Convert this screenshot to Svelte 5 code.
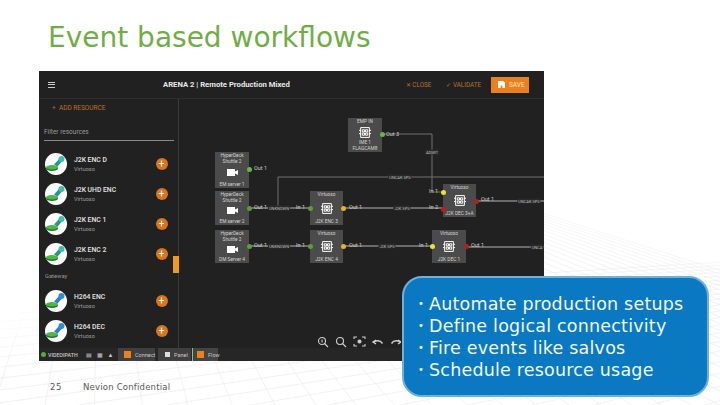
<script>
  const resources = [
    { name: "J2K ENC D", kind: "enc" },
    { name: "J2K UHD ENC", kind: "enc" },
    { name: "J2K ENC 1", kind: "enc" },
    { name: "J2K ENC 2", kind: "enc" },
    { group: "Gateway" },
    { name: "H264 ENC", kind: "h264" },
    { name: "H264 DEC", kind: "h264" }
  ];

  const nodes = [
    { x: 348, y: 118, w: 34, h: 34, top: "EMP IN", icon: "chip", bottom: "IME 1\nFLAGCAM8" },
    { x: 215, y: 152, w: 34, h: 36, top: "HyperDeck\nShuttle 2", icon: "cam", bottom: "EM server 1" },
    { x: 215, y: 191, w: 34, h: 34, top: "HyperDeck\nShuttle 2", icon: "cam", bottom: "EM server 2" },
    { x: 215, y: 230, w: 34, h: 33, top: "HyperDeck\nShuttle 2", icon: "cam", bottom: "DM Server 4" },
    { x: 310, y: 191, w: 33, h: 34, top: "Virtuoso", icon: "chip", bottom: "J2K ENC 3" },
    { x: 310, y: 230, w: 33, h: 33, top: "Virtuoso", icon: "chip", bottom: "J2K ENC 4" },
    { x: 443, y: 184, w: 33, h: 33, top: "Virtuoso", icon: "chip", bottom: "J2K DEC 3+A" },
    { x: 432, y: 230, w: 34, h: 33, top: "Virtuoso", icon: "chip", bottom: "J2K DEC 1" }
  ];

  const dimWires = ["M382 134H432V192H443", "M278 208V177H544"];
  const wires = [
    "M249 208H310",
    "M249 246H310",
    "M343 208H443",
    "M343 246H432",
    "M476 201H544",
    "M466 247H544"
  ];

  const ports = [
    [382, 134, "#6fb544"], [249, 169, "#6fb544"],
    [249, 208, "#5f9a3e"], [249, 246, "#5f9a3e"],
    [310, 208, "#5f9a3e"], [310, 246, "#5f9a3e"],
    [343, 208, "#e6b422"], [343, 246, "#e6b422"],
    [443, 192, "#e8e23a"], [443, 209, "#b3201f"], [476, 201, "#b3201f"],
    [432, 246, "#e8e23a"], [466, 246, "#b3201f"]
  ];

  const portLabels = [
    [254, 165, "Out 1"], [386, 131, "Out 3"],
    [254, 204, "Out 1"], [296, 204, "In 1"],
    [254, 242, "Out 1"], [296, 242, "In 1"],
    [349, 204, "Out 1"], [349, 242, "Out 1"],
    [429, 188, "In 1"], [429, 204, "In 2"],
    [481, 196, "Out 1"], [419, 242, "In 1"], [471, 242, "Out 1"]
  ];

  const wireLabels = [
    [432, 152, "ADMIT"], [400, 177, "UNCAK SPS"],
    [279, 208, "UNKNOWN"], [279, 246, "UNKNOWN"],
    [402, 208, "J2K SPS"], [387, 246, "J2K SPS"],
    [529, 201, "UNCAK SPS"], [537, 247, "UNCA"]
  ];

  const points = [
    "Automate production setups",
    "Define logical connectivity",
    "Fire events like salvos",
    "Schedule resource usage"
  ];

  // perspective floor behind the slide: two fans of rays, one per vanishing point
  const slope = 0.13;
  const fan = (vx, vy) => {
    let d = "";
    for (let t = vx - 1300; t <= vx + 1300; t += 36) {
      const py = vy + (t - vx) * slope + 250;
      d += `M${vx} ${vy}L${vx + (t - vx) * 4} ${vy + (py - vy) * 4}`;
    }
    return d;
  };
  const floor = fan(100, 70) + fan(1300, 226);
</script>

<div class="slide">
  <svg class="backdrop" viewBox="0 0 720 405" aria-hidden="true">
    <defs>
      <linearGradient id="fade" gradientUnits="userSpaceOnUse" x1="600" y1="133" x2="580" y2="283">
        <stop offset="0" stop-color="#fff" />
        <stop offset="0.2" stop-color="#fff" stop-opacity="0.85" />
        <stop offset="1" stop-color="#fff" stop-opacity="0" />
      </linearGradient>
      <linearGradient id="fade-left" x1="0" y1="0" x2="0" y2="1">
        <stop offset="0.8" stop-color="#fff" />
        <stop offset="1" stop-color="#fff" stop-opacity="0" />
      </linearGradient>
    </defs>
    <path d={floor} />
    <polygon points="-100,30 -100,194 820,313 820,155" fill="url(#fade)" />
    <rect x="0" y="50" width="39" height="320" fill="url(#fade-left)" />
  </svg>

  <h1>Event based workflows</h1>

  <div class="app-shot">
    <header class="topbar">
      <div class="burger"><i></i><i></i><i></i></div>
      <div class="app-title">ARENA 2 | Remote Production Mixed</div>
      <div class="actions">
        <span class="action">✕ CLOSE</span>
        <span class="action">✓ VALIDATE</span>
        <span class="save">
          <svg width="7" height="7" viewBox="0 0 8 8"><path d="M0 0h6l2 2v6H5V5H3v3H0z" fill="#fff" /></svg>
          SAVE
        </span>
      </div>
    </header>

    <div class="work">
      <aside class="sidebar">
        <div class="add">+&nbsp;&nbsp;ADD RESOURCE</div>
        <div class="filter">Filter resources</div>
        <ul>
          {#each resources as r}
            {#if r.group}
              <li class="group">{r.group}</li>
            {:else}
              <li class="resource">
                <svg class="avatar" viewBox="0 0 22 22">
                  <circle cx="11" cy="11" r="11" fill="#fff" />
                  <ellipse cx="7" cy="15.500" rx="6" ry="2.500" fill="#1f7a2a" />
                  <ellipse cx="7" cy="14.300" rx="6" ry="2.200" fill="#49b845" />
                  <path d="M9 11.500L15 5l3 2.500-5.500 6z" fill={r.kind === "enc" ? "#2a9488" : "#2f7fc0"} />
                  <circle cx="16.500" cy="6" r="3" fill={r.kind === "enc" ? "#3cc0ae" : "#2b8ed8"} />
                </svg>
                <div class="res-text">
                  <b>{r.name}</b>
                  <small>Virtuoso</small>
                </div>
                <span class="plus">+</span>
              </li>
            {/if}
          {/each}
        </ul>
        <div class="scroll-thumb"></div>
      </aside>
      <div class="canvas"></div>
    </div>

    <footer class="statusbar">
      <span class="brand"><i></i>VIDEOIPATH</span>
      <span class="glyph">▤</span><span class="glyph">▦</span><span class="glyph">▲</span>
      <span class="tab connect"><em></em>Connect</span>
      <span class="tab panel"><em class="white"></em>Panel</span>
      <span class="tab flow"><em></em>Flow</span>
    </footer>

    <div class="zoom-tools">
      <svg width="84" height="12" viewBox="0 0 84 12" fill="none" stroke="#d0d0d0" stroke-width="1.100">
        <circle cx="5" cy="5" r="3.500" /><path d="M7.500 7.500L11 11M5 3.500v3" />
        <circle cx="23" cy="5" r="3.500" /><path d="M25.500 7.500L29 11" />
        <path d="M37 3V1h3M45 1h3v2M48 8v2h-3M40 10h-3V8" /><circle cx="42.500" cy="5.500" r="1.500" fill="#d0d0d0" />
        <path d="M59 4l-3 2 3 2M56.500 6c4-2 7-1.500 9 1.500" stroke-width="1.400" />
        <path d="M81 4l3 2-3 2M83.500 6c-4-2-7-1.500-9 1.500" stroke-width="1.400" />
      </svg>
    </div>
  </div>

  <svg class="wires" viewBox="0 0 720 405" aria-hidden="true">
    {#each dimWires as d}
      <path {d} class="dim" />
    {/each}
    {#each wires as d}
      <path {d} />
    {/each}
  </svg>

  {#each nodes as n}
    <div class="node" style="left:{n.x}px;top:{n.y}px;width:{n.w}px;height:{n.h}px">
      <span class="node-label">{n.top}</span>
      {#if n.icon === "cam"}
        <svg width="11" height="7" viewBox="0 0 11 7"><path d="M0 0h8v2.500L11 1v5L8 4.500V7H0z" fill="#fff" /></svg>
      {:else}
        <svg width="12" height="11" viewBox="0 0 11 10"><path d="M1.500.5h8v9h-8zM0 3h1.500M0 6h1.500M9.500 3H11M9.500 6H11M3 2.500h2v2H3zM6 2.500h2v2H6zM3 5.500h2v2H3zM6 5.500h2v2H6z" fill="none" stroke="#fff" stroke-width=".9" /></svg>
      {/if}
      <span class="node-label">{n.bottom}</span>
    </div>
  {/each}

  {#each ports as [x, y, color]}
    <span class="port" style="left:{x - 2.5}px;top:{y - 2.5}px;background:{color}"></span>
  {/each}
  {#each portLabels as [x, y, text]}
    <span class="port-label" style="left:{x}px;top:{y}px">{text}</span>
  {/each}
  {#each wireLabels as [x, y, text]}
    <span class="wire-label" style="left:{x}px;top:{y}px">{text}</span>
  {/each}

  <div class="page-foot">
    <span class="page-no">25</span>
    <span>Nevion Confidential</span>
  </div>

  <div class="callout">
    <ul>
      {#each points as p}
        <li>{p}</li>
      {/each}
    </ul>
  </div>
</div>

<style>
  :global(body) {
    margin: 0;
    background: #fff;
  }

  .slide {
    position: relative;
    width: 720px;
    height: 405px;
    overflow: hidden;
    background: #fff;
    font-family: "DejaVu Sans", sans-serif;
    box-sizing: border-box;
    padding: 18px 0 0 48px;
  }

  .backdrop {
    position: absolute;
    inset: 0;
    width: 720px;
    height: 405px;
  }

  .backdrop path {
    fill: none;
    stroke: #ececec;
    stroke-width: 0.7;
  }

  h1 {
    position: relative;
    margin: 0;
    height: 40px;
    font-size: 28px;
    line-height: 40px;
    font-weight: 400;
    color: #70ad47;
    white-space: nowrap;
  }

  .app-shot {
    position: relative;
    width: 505px;
    height: 290px;
    margin: 13px 0 0 -9px;
    background: #212121;
    display: flex;
    flex-direction: column;
    font-family: Roboto, sans-serif;
    color: #ddd;
  }

  .topbar {
    position: relative;
    height: 27px;
    flex: none;
    display: flex;
    align-items: center;
    padding: 0 15px 0 9px;
    border-bottom: 1px solid #2e2e2e;
  }

  .burger {
    display: flex;
    flex-direction: column;
    gap: 1.5px;
    width: 7px;
  }

  .burger i {
    display: block;
    height: 1px;
    background: #ccc;
  }

  .app-title {
    margin-left: 108px;
    font-size: 7.7px;
    font-weight: 700;
    color: #e8e8e8;
    white-space: nowrap;
  }

  .actions {
    margin-left: auto;
    display: flex;
    align-items: center;
    gap: 15px;
  }

  .action {
    font-size: 6.3px;
    color: #b8722c;
    white-space: nowrap;
  }

  .save {
    display: flex;
    align-items: center;
    gap: 4px;
    width: 38px;
    height: 16px;
    box-sizing: border-box;
    padding-left: 7px;
    margin-left: -5px;
    background: #e8811e;
    color: #fbe3c8;
    font-size: 6.500px;
  }

  .work {
    flex: 1;
    display: flex;
    min-height: 0;
  }

  .sidebar {
    position: relative;
    width: 139px;
    flex: none;
    border-right: 1px solid #3a3a3a;
    padding-top: 4px;
    box-sizing: content-box;
  }

  .add {
    padding-left: 13px;
    height: 10px;
    font-size: 6.500px;
    line-height: 10px;
    color: #b8722c;
  }

  .filter {
    margin: 14px 4px 0 5px;
    height: 13px;
    border-bottom: 1px solid #8a8a8a;
    font-size: 6.500px;
    line-height: 11px;
    color: #9a9a9a;
  }

  ul {
    list-style: none;
    margin: 0;
    padding: 0;
  }

  .sidebar ul {
    margin-top: 8px;
  }

  .resource {
    display: flex;
    align-items: center;
    height: 30px;
    padding-left: 6px;
  }

  .group {
    height: 17px;
    padding-left: 6px;
    font-size: 5.800px;
    line-height: 14px;
    color: #999;
  }

  .avatar {
    width: 22px;
    height: 22px;
    flex: none;
  }

  .res-text {
    margin-left: 7px;
    flex: 1;
    display: flex;
    flex-direction: column;
    gap: 2px;
  }

  .res-text b {
    font-size: 6.800px;
    line-height: 8px;
    font-weight: 500;
    color: #e4e4e4;
  }

  .res-text small {
    font-size: 5.500px;
    line-height: 7px;
    color: #a0a0a0;
  }

  .plus {
    width: 12px;
    height: 12px;
    margin-right: 10.500px;
    border-radius: 50%;
    background: #d9751c;
    color: #fff;
    font-size: 10px;
    line-height: 12px;
    text-align: center;
  }

  .scroll-thumb {
    position: absolute;
    right: -1px;
    top: 157px;
    width: 6px;
    height: 17px;
    background: #f09a1f;
  }

  .canvas {
    flex: 1;
  }

  .statusbar {
    flex: none;
    height: 13px;
    display: flex;
    align-items: center;
    padding-left: 2px;
    background: #262626;
    font-size: 5.500px;
    color: #c8c8c8;
  }

  .brand {
    display: flex;
    align-items: center;
    gap: 2px;
    width: 42px;
    font-size: 5.300px;
    font-weight: 500;
    white-space: nowrap;
  }

  .brand i {
    width: 5px;
    height: 5px;
    flex: none;
    border-radius: 50%;
    background: #5fa63f;
  }

  .glyph {
    width: 11px;
    font-size: 6px;
    text-align: center;
  }

  .tab {
    height: 13px;
    display: flex;
    align-items: center;
    gap: 4px;
    padding-left: 6px;
    background: #3f3f3f;
    box-sizing: border-box;
  }

  .tab.connect {
    margin-left: 2px;
    width: 37px;
  }

  .tab.panel {
    margin-left: 3px;
    width: 33px;
    padding-left: 7px;
  }

  .tab.flow {
    margin-left: 1px;
    width: 26px;
    padding-left: 4px;
    border-left: 1.500px solid #8cc56a;
    background: #444;
  }

  .tab em {
    width: 7px;
    height: 7px;
    background: #e8811e;
    flex: none;
  }

  .tab em.white {
    width: 5px;
    height: 5px;
    background: #ddd;
  }

  .zoom-tools {
    position: absolute;
    left: 278px;
    top: 262px;
  }

  .wires {
    position: absolute;
    inset: 0;
    width: 720px;
    height: 405px;
  }

  .wires path {
    fill: none;
    stroke: #b5b5b5;
    stroke-width: 1;
  }

  .wires path.dim {
    stroke: #707070;
  }

  .node {
    position: absolute;
    box-sizing: border-box;
    padding: 1px 0;
    background: #4b4b4b;
    display: flex;
    flex-direction: column;
    align-items: center;
    justify-content: space-between;
    font-family: Roboto, sans-serif;
  }

  .node-label {
    font-size: 4.800px;
    line-height: 5.500px;
    color: #d4d4d4;
    text-align: center;
    white-space: pre-line;
  }

  .port {
    position: absolute;
    width: 5px;
    height: 5px;
    border-radius: 50%;
  }

  .port-label {
    position: absolute;
    font-family: Roboto, sans-serif;
    font-size: 5.500px;
    line-height: 7px;
    color: #d0d0d0;
    white-space: nowrap;
  }

  .wire-label {
    position: absolute;
    transform: translate(-50%, -50%);
    padding: 0 1px;
    background: #2a2a2a;
    font-family: Roboto, sans-serif;
    font-size: 4px;
    line-height: 5px;
    color: #bdbdbd;
    white-space: nowrap;
  }

  .page-foot {
    position: relative;
    margin: 21px 0 0 2px;
    display: flex;
    font-size: 8.500px;
    line-height: 11px;
    letter-spacing: 0.2px;
    color: #595959;
  }

  .page-no {
    width: 33px;
    letter-spacing: 0.5px;
  }

  .callout {
    position: absolute;
    left: 402px;
    top: 276px;
    width: 307px;
    height: 121px;
    box-sizing: border-box;
    padding: 15px 0 0 13px;
    background: #0b79c1;
    border: 2px solid #6fb1dc;
    border-radius: 20px;
  }

  .callout li {
    position: relative;
    padding-left: 12px;
    font-size: 17.500px;
    line-height: 22px;
    letter-spacing: 0.2px;
    color: #f2f8fc;
    white-space: nowrap;
  }

  .callout li::before {
    content: "•";
    position: absolute;
    left: 1px;
    font-size: 10px;
  }
</style>
